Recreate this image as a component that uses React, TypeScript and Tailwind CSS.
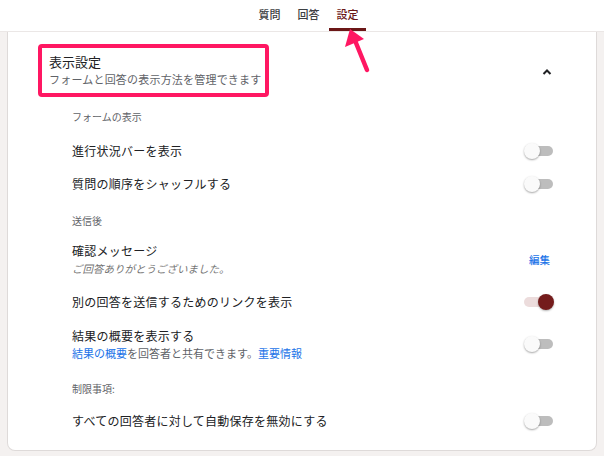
import React from "react";

const font = { fontFamily: '"Noto Sans CJK JP", "Noto Sans", sans-serif' };

function Toggle({ on = false }: { on?: boolean }) {
  if (on) {
    return (
      <div className="relative h-[16px] w-[31px] shrink-0">
        <div className="absolute left-[1px] top-[3px] h-[10px] w-[24px] rounded-full bg-[#ecdcdc]" />
        <div className="absolute right-0 top-0 h-[16px] w-[16px] rounded-full bg-[#741c1c] shadow-[0_1px_2px_rgba(0,0,0,0.3)]" />
      </div>
    );
  }
  return (
    <div className="relative h-[16px] w-[30px] shrink-0">
      <div className="absolute right-[1px] top-[3px] h-[10px] w-[24px] rounded-full bg-[#bdbdbd]" />
      <div className="absolute left-0 top-0 h-[16px] w-[16px] rounded-full bg-[#fafafa] shadow-[0_1px_2px_rgba(0,0,0,0.35)]" />
    </div>
  );
}

function Section({ label, className = "" }: { label: string; className?: string }) {
  return <div className={`h-[14px] text-[10px] leading-[14px] text-[#5f6368] ${className}`}>{label}</div>;
}

function Row({ label, on, className = "" }: { label: string; on?: boolean; className?: string }) {
  return (
    <div className={`flex h-[33px] items-center justify-between ${className}`}>
      <span className="text-[12px] tracking-[0.25px] text-[#202124]">{label}</span>
      <Toggle on={on} />
    </div>
  );
}

export default function App() {
  return (
    <div className="relative h-[456px] w-[604px] overflow-hidden bg-[#f4f1f0]" style={font}>
      {/* tabs */}
      <div className="flex h-[32px] items-end justify-center border-b border-[#ebe7e6] bg-white pl-[13px]">
        <div className="flex gap-[2px]">
          {["質問", "回答", "設定"].map((t, i) => (
            <div
              key={t}
              className={`flex h-[32px] w-[37px] items-center justify-center border-b-[3px] pt-[1px] text-[11px] font-medium ${
                i === 2 ? "border-[#6b1717] text-[#6b1717]" : "border-transparent text-[#3c4043]"
              }`}
            >
              {t}
            </div>
          ))}
        </div>
      </div>

      {/* card */}
      <div className="mx-[7px] h-[419px] rounded-b-[8px] border border-t-0 border-[#dedad9] bg-white">
        <div className="flex items-start justify-between pl-[30px] pr-[44px] pt-[12px]">
          <div className="h-[53px] w-[231px] rounded-[4px] border-[4px] border-[#ff1762] pl-[7px] pt-[5px]">
            <div className="text-[13px] leading-[18px] text-[#202124]">表示設定</div>
            <div className="text-[11px] leading-[17px] tracking-[0.2px] text-[#5f6368]">
              フォームと回答の表示方法を管理できます
            </div>
          </div>
          <svg width="10" height="8" viewBox="0 0 10 8" className="mt-[24px]">
            <path d="M1.5 6 L5 2.5 L8.5 6" fill="none" stroke="#202124" strokeWidth="2" />
          </svg>
        </div>

        <div className="pl-[64px] pr-[42px]">
          <Section label="フォームの表示" className="mt-[13px]" />
          <Row label="進行状況バーを表示" className="mt-[10px]" />
          <Row label="質問の順序をシャッフルする" />

          <Section label="送信後" className="mt-[14px]" />
          <div className="mt-[14px] flex items-center justify-between">
            <div>
              <div className="text-[12px] leading-[18px] tracking-[0.25px] text-[#202124]">確認メッセージ</div>
              <div className="mt-[1px] text-[10.5px] italic leading-[16px] text-[#757575]">
                ご回答ありがとうございました。
              </div>
            </div>
            <span className="mr-[4px] text-[10.5px] font-medium text-[#1a73e8]">編集</span>
          </div>
          <Row label="別の回答を送信するためのリンクを表示" on className="mt-[8px] h-[32px]" />
          <div className="mt-[9px] flex items-center justify-between">
            <div>
              <div className="text-[12px] leading-[18px] tracking-[0.25px] text-[#202124]">結果の概要を表示する</div>
              <div className="text-[11px] leading-[16px] text-[#5f6368]">
                <span className="text-[#1a73e8]">結果の概要</span>を回答者と共有できます。
                <span className="text-[#1a73e8]">重要情報</span>
              </div>
            </div>
            <Toggle />
          </div>

          <Section label="制限事項:" className="mt-[21px]" />
          <Row label="すべての回答者に対して自動保存を無効にする" className="mt-[8px] h-[32px]" />
        </div>
      </div>

      {/* annotation arrow */}
      <svg className="absolute left-0 top-0" width="604" height="456" viewBox="0 0 604 456">
        <line x1="367" y1="70" x2="354" y2="38" stroke="#ff1762" strokeWidth="4.5" strokeLinecap="round" />
        <polygon points="350,29 345,47 364,39" fill="#ff1762" />
      </svg>
    </div>
  );
}
